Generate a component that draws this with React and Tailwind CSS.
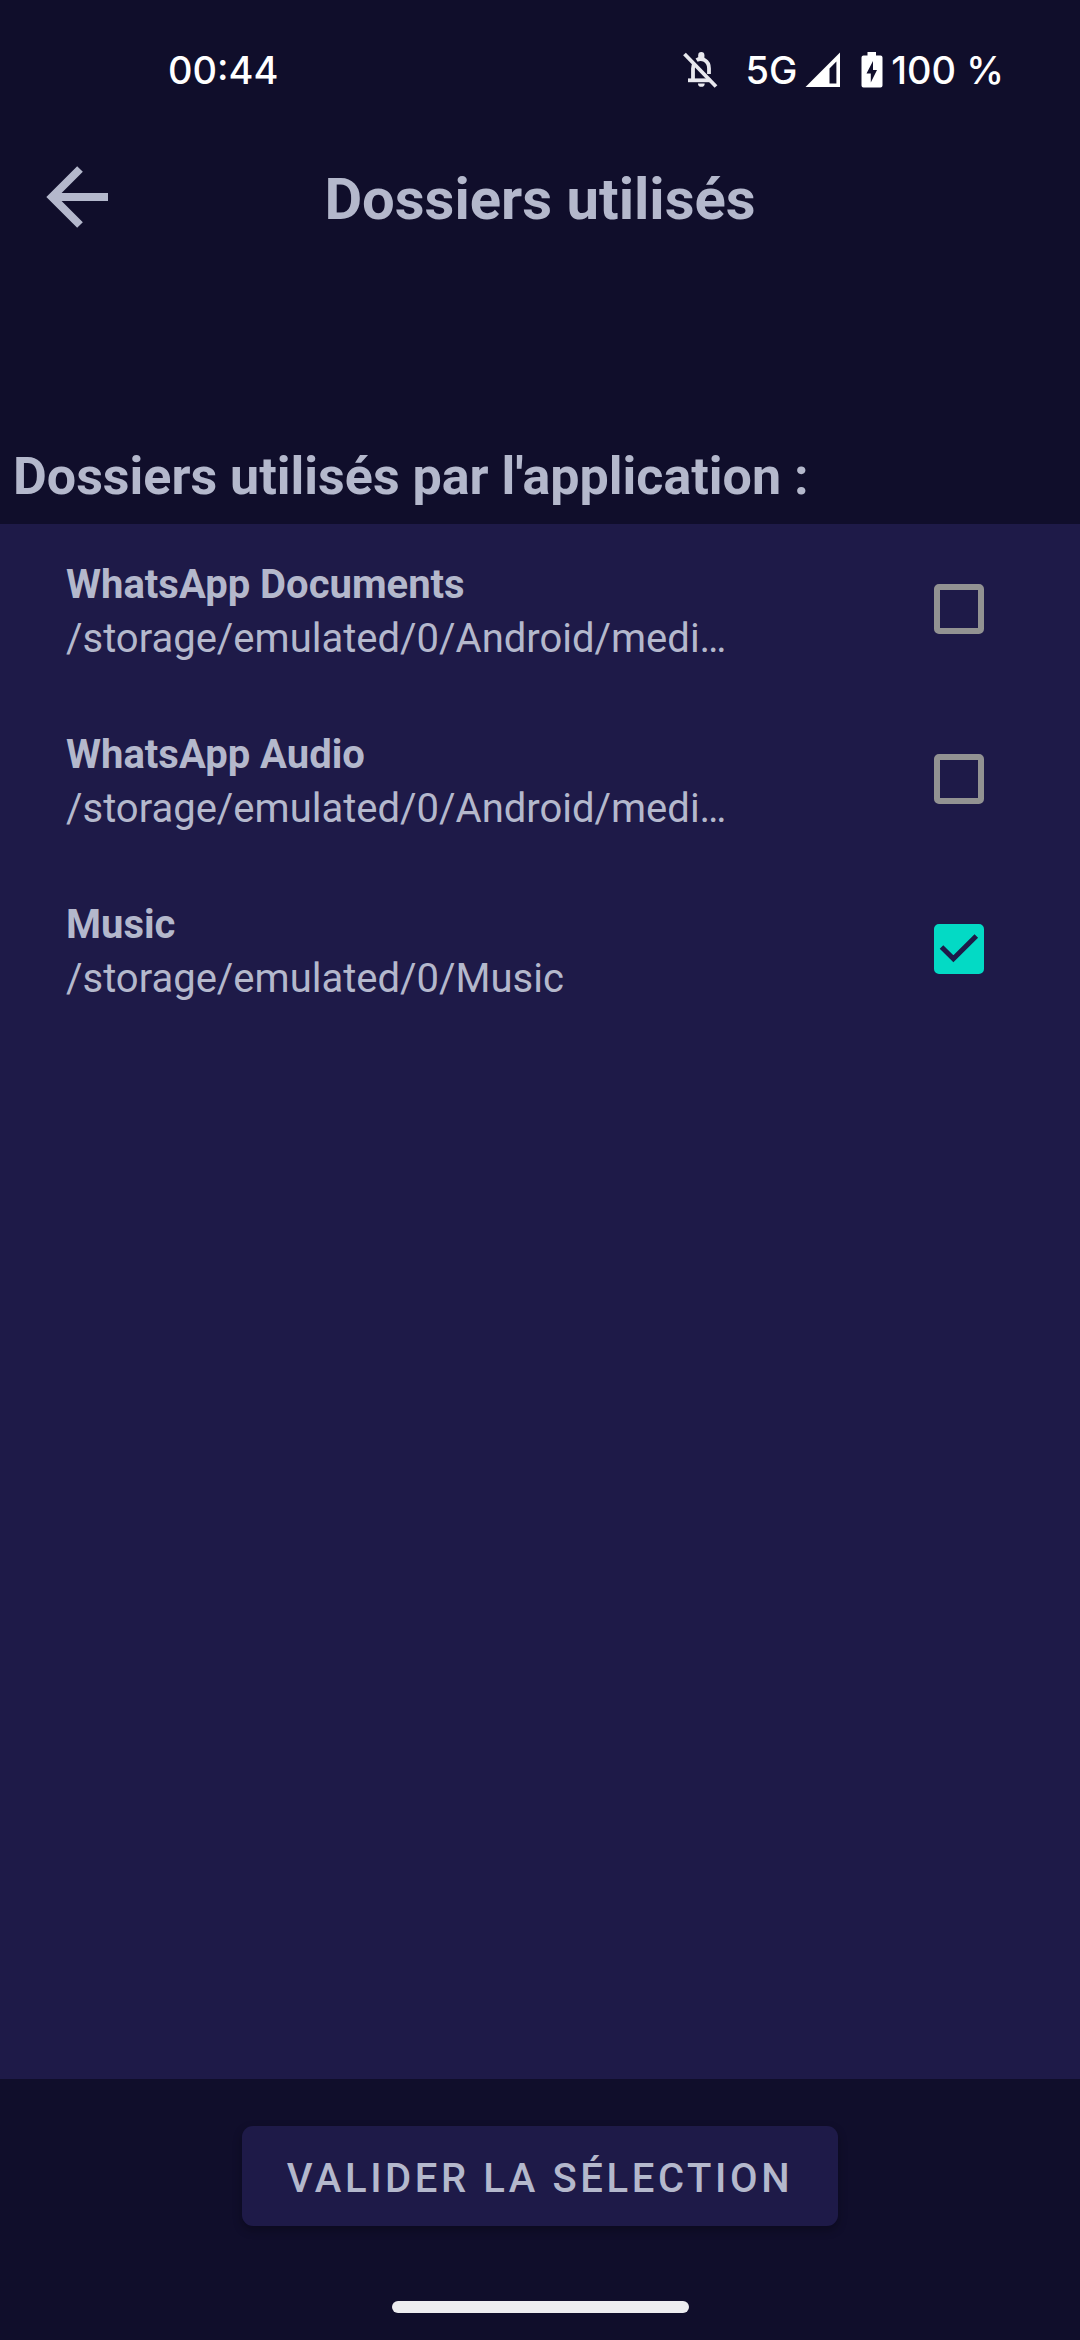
const folders = [
  { id: "wa-docs", name: "WhatsApp Documents", path: "/storage/emulated/0/Android/medi…", used: false },
  { id: "wa-audio", name: "WhatsApp Audio", path: "/storage/emulated/0/Android/medi…", used: false },
  { id: "music", name: "Music", path: "/storage/emulated/0/Music", used: true },
];

function StatusBar() {
  return (
    <div className="flex h-[140px] items-center pr-[76px] pl-[168px] font-['Inter',sans-serif] text-[38px] font-medium text-white">
      <span className="flex-1">00:44</span>
      <svg className="mr-[26px] h-[36px] w-[36px]" viewBox="0 0 36 36" fill="none" stroke="#e8e8ee" strokeWidth="3.8" aria-hidden="true">
        <path d="M1.5 2L33 34.5" />
        <path d="M5 28.3H27.5" />
        <path d="M10 28V16.5C10 14.5 10.4 13 11.2 11.6" />
        <path d="M13.6 8.2C18.5 5.2 26 8.5 26 16.5V22" />
        <path d="M15.2 7V3.2A3.1 3.1 0 0 1 21.4 3.2V7Z" fill="#e8e8ee" stroke="none" />
        <path d="M15 31.5H21.7A3.3 3.3 0 0 1 15 31.5Z" fill="#e8e8ee" stroke="none" />
      </svg>
      <span className="mr-2">5G</span>
      <svg className="mr-5 h-[36px] w-[36px]" viewBox="0 0 36 36" aria-hidden="true">
        <path d="M35 0.5V35H0.5Z M31.4 9.5L24.5 16.5V31.5H31.4Z" fill="#fff" fillRule="evenodd" />
      </svg>
      <svg className="mr-2 h-[36px] w-[22px]" viewBox="0 0 22 36" aria-hidden="true">
        <path d="M6.5 0H15V3.5H19.5A2 2 0 0 1 21.5 5.5V33.5A2 2 0 0 1 19.5 35.5H2.5A2 2 0 0 1 0.5 33.5V5.5A2 2 0 0 1 2.5 3.5H6.5Z M12 9L5.5 21.5H9.8V30.5L16 18H12Z" fill="#fff" fillRule="evenodd" />
      </svg>
      <span>100 %</span>
    </div>
  );
}

function FolderRow({ folder }) {
  return (
    <li>
      <label htmlFor={folder.id} className="flex h-[170px] items-center pr-24 pl-[66px]">
        <span className="flex flex-col pt-1.5 text-[40px] leading-[54px]">
          <span className="font-bold">{folder.name}</span>
          <span>{folder.path}</span>
        </span>
        <span className="ml-auto grid size-[50px]">
          <input
            id={folder.id}
            type="checkbox"
            defaultChecked={folder.used}
            className="peer col-start-1 row-start-1 size-[50px] appearance-none rounded-[5px] border-[6px] border-[#929292] checked:border-[#03dac5] checked:bg-[#03dac5]"
          />
          <svg className="pointer-events-none invisible col-start-1 row-start-1 size-[50px] peer-checked:visible" viewBox="0 0 50 50" fill="none" aria-hidden="true">
            <path d="M7.5 22.9L19.4 34.8L42.3 11.9" stroke="#1e1a48" strokeWidth="5" />
          </svg>
        </span>
      </label>
    </li>
  );
}

export default function App() {
  return (
    <div className="flex min-h-screen flex-col bg-[#100e2b] font-['Roboto',sans-serif] text-[#b4b8cc]">
      <StatusBar />
      <header className="grid h-[118px] grid-cols-[1fr_auto_1fr] items-center px-[46px]">
        <button type="button" aria-label="Retour" className="mb-1 size-[62px]">
          <svg viewBox="0 0 62 62" className="size-[62px]" fill="none" stroke="currentColor" strokeWidth="8" aria-hidden="true">
            <path d="M34 3L6 31L34 59M6 31H62" />
          </svg>
        </button>
        <h1 className="text-[58px] font-bold">Dossiers utilisés</h1>
      </header>
      <h2 className="mt-[184px] h-[82px] px-[13px] text-[52px] leading-[70px] font-bold">Dossiers utilisés par l'application :</h2>
      <ul className="flex-1 bg-[#1e1a48]">
        {folders.map((folder) => (
          <FolderRow key={folder.id} folder={folder} />
        ))}
      </ul>
      <footer className="flex h-[261px] flex-col items-center pt-[47px]">
        <button type="button" className="h-[100px] rounded-[11px] bg-[#1e1a48] px-[45px] pt-1.5 text-[40px] font-medium tracking-[0.09em] uppercase shadow-[0_4px_10px_rgba(0,0,0,0.3)]">
          Valider la sélection
        </button>
        <div className="mt-[75px] h-3 w-[297px] rounded-full bg-[#ededf0]" />
      </footer>
    </div>
  );
}
